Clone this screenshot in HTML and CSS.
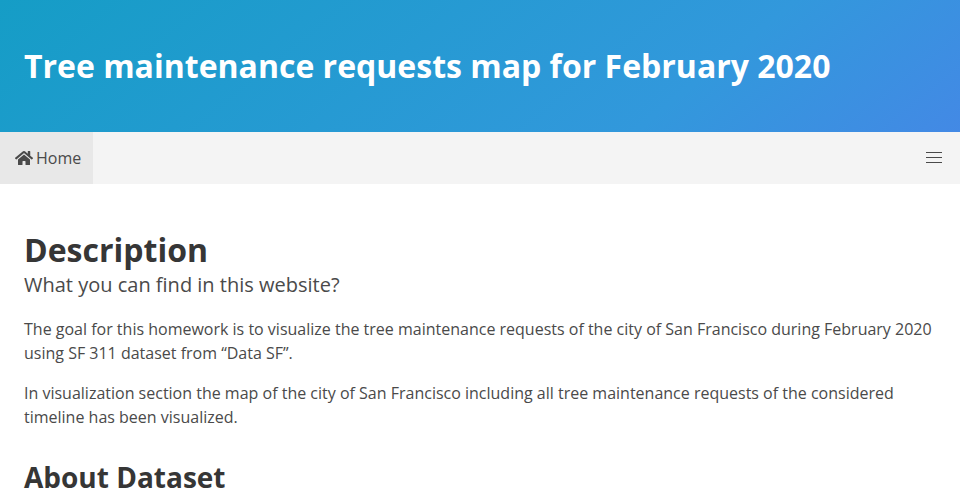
FILE: index.html
```
<!DOCTYPE html>
<html lang="en">
<head>
  <meta charset="UTF-8">
  <meta name="viewport" content="width=device-width, initial-scale=1.0">
  <title>Tree maintenance requests map</title>
  <link rel="stylesheet" href="styles.css">
</head>
<body>
  <header class="hero">
    <h1 class="hero-title">Tree maintenance requests map for February 2020</h1>
  </header>

  <nav class="navbar" aria-label="main navigation">
    <a class="navbar-item is-active" href="#">
      <svg class="icon" viewBox="0 0 576 512" aria-hidden="true">
        <path fill="currentColor" d="M280.37 148.26L96 300.11V464a16 16 0 0 0 16 16l112.06-.29a16 16 0 0 0 15.92-16V368a16 16 0 0 1 16-16h64a16 16 0 0 1 16 16v95.64a16 16 0 0 0 16 16.05L464 480a16 16 0 0 0 16-16V300L295.67 148.26a12.19 12.19 0 0 0-15.3 0zM571.6 251.47L488 182.56V44.05a12 12 0 0 0-12-12h-56a12 12 0 0 0-12 12v72.61L318.47 43a48 48 0 0 0-61 0L4.34 251.47a12 12 0 0 0-1.6 16.9l25.5 31A12 12 0 0 0 45.15 301l235.22-193.74a12.19 12.19 0 0 1 15.3 0L530.9 301a12 12 0 0 0 16.9-1.6l25.5-31a12 12 0 0 0-1.7-16.93z"/>
      </svg>
      <span>Home</span>
    </a>
    <button class="navbar-burger" type="button" aria-label="menu" aria-expanded="false">
      <span></span>
      <span></span>
      <span></span>
    </button>
  </nav>

  <main class="section">
    <h2 class="title">Description</h2>
    <p class="subtitle">What you can find in this website?</p>
    <p>The goal for this homework is to visualize the tree maintenance requests of the city of San Francisco during February 2020 using SF 311 dataset from “Data SF”.</p>
    <p>In visualization section the map of the city of San Francisco including all tree maintenance requests of the considered timeline has been visualized.</p>
    <h3 class="title-small">About Dataset</h3>
  </main>
</body>
</html>
```

FILE: styles.css
```
* {
  box-sizing: border-box;
}
body {
  margin: 0;
  font-family: "Open Sans", sans-serif;
  font-size: 16px;
  line-height: 24px;
  color: #4a4a4a;
  background-color: #fff;
}
h1, h2, h3, p {
  margin: 0;
}
.hero {
  padding: 48px 24px;
  background-image: linear-gradient(141deg, #159dc6 0%, #3298dc 71%, #4389e5 100%);
}
.hero-title {
  font-size: 32px;
  font-weight: 700;
  line-height: 36px;
  color: #fff;
}
.navbar {
  display: flex;
  justify-content: space-between;
  min-height: 52px;
  background-color: #f4f4f4;
}
.navbar-item {
  display: flex;
  align-items: center;
  gap: 3px;
  padding: 8px 12px 8px 15px;
  color: #4a4a4a;
  text-decoration: none;
}
.navbar-item.is-active {
  background-color: #e8e8e8;
}
.icon {
  width: 18px;
  height: 16px;
}
.navbar-burger {
  display: flex;
  flex-direction: column;
  align-items: center;
  justify-content: center;
  gap: 4px;
  width: 52px;
  padding: 0 0 2px;
  border: 0;
  background: none;
  color: #4a4a4a;
  cursor: pointer;
}
.navbar-burger span {
  width: 16px;
  height: 1px;
  background-color: currentColor;
}
.section {
  padding: 48px 24px 0;
}
.title {
  font-size: 32px;
  font-weight: 700;
  line-height: 36px;
  color: #363636;
}
.subtitle {
  margin: 4px 0 20px;
  font-size: 20px;
  line-height: 25px;
}
.section p + p {
  margin-top: 16px;
}
.title-small {
  margin-top: 32px;
  font-size: 28px;
  font-weight: 700;
  line-height: 32px;
  color: #363636;
}
```
